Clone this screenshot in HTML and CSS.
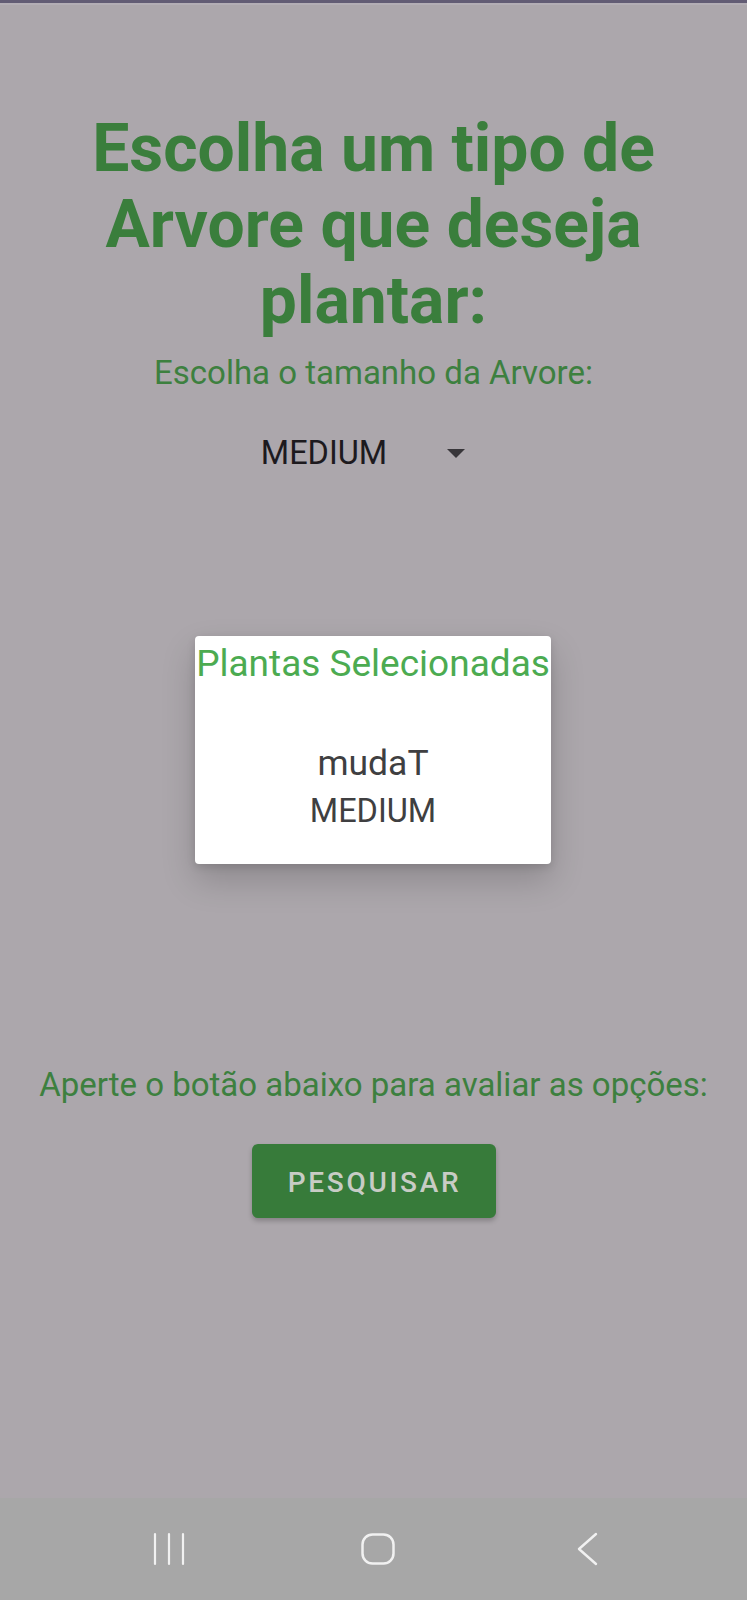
FILE: index.html
```html
<!DOCTYPE html>
<html lang="pt">
<head>
<meta charset="utf-8">
<title>Escolha um tipo de Arvore</title>
<link rel="stylesheet" href="styles.css">
</head>
<body>
<div class="status"></div>
<main class="screen">
  <h1 class="title">Escolha um tipo de<br>Arvore que deseja<br>plantar:</h1>
  <p class="label">Escolha o tamanho da Arvore:</p>
  <div class="spinner">
    <span class="spinner-text">MEDIUM</span>
    <svg class="spinner-arrow" width="18" height="9" viewBox="0 0 18 9"><path d="M0 0 L18 0 L9 9 Z" fill="#38363a"/></svg>
  </div>
  <p class="label hint">Aperte o botão abaixo para avaliar as opções:</p>
  <button class="btn">PESQUISAR</button>
</main>
<nav class="navbar">
  <svg class="nav-icon" width="40" height="40" viewBox="0 0 40 40"><g stroke="#f1f1f1" stroke-width="2.2" stroke-linecap="round"><line x1="6" y1="5" x2="6" y2="35"/><line x1="20" y1="5" x2="20" y2="35"/><line x1="34" y1="5" x2="34" y2="35"/></g></svg>
  <svg class="nav-icon" width="40" height="40" viewBox="0 0 40 40"><rect x="4.5" y="5.5" width="31" height="29" rx="10" fill="none" stroke="#f1f1f1" stroke-width="2.5"/></svg>
  <svg class="nav-icon" width="40" height="40" viewBox="0 0 40 40"><path d="M29 5 L12 20 L29 35" fill="none" stroke="#f1f1f1" stroke-width="2.4" stroke-linecap="round" stroke-linejoin="round"/></svg>
</nav>
<div class="overlay">
  <div class="dialog">
    <div class="dialog-title">Plantas Selecionadas</div>
    <div class="dialog-name">mudaT</div>
    <div class="dialog-size">MEDIUM</div>
  </div>
</div>
</body>
</html>
```
FILE: styles.css
```css
html, body {
  margin: 0;
  padding: 0;
}
body {
  width: 747px;
  height: 1600px;
  background: #aca7ac;
  font-family: Roboto, "Liberation Sans", sans-serif;
  display: flex;
  flex-direction: column;
  position: relative;
  overflow: hidden;
}
.status {
  height: 3px;
  background: #625c74;
  border-bottom: 2px solid #b3aeb5;
  flex: none;
}
.screen {
  flex: 1;
  display: flex;
  flex-direction: column;
  align-items: center;
  padding-top: 106px;
}
.title {
  margin: 0;
  font-size: 66px;
  line-height: 76px;
  font-weight: 700;
  color: #3a7e3c;
  text-align: center;
}
.label {
  margin: 14px 0 0;
  font-size: 33px;
  line-height: 40px;
  color: #3d803f;
  text-align: center;
}
.spinner {
  margin-top: 40px;
  display: flex;
  align-items: center;
  gap: 60px;
  padding-right: 21px;
  height: 40px;
}
.spinner-text {
  font-size: 32.5px;
  line-height: 40px;
  color: #1d1a1e;
}
.spinner-arrow {
  display: block;
}
.hint {
  margin-top: 592px;
}
.btn {
  margin-top: 39px;
  width: 244px;
  height: 74px;
  border: none;
  border-radius: 6px;
  background: #377b3a;
  color: #c8ccc5;
  font-family: Roboto, "Liberation Sans", sans-serif;
  font-size: 28px;
  font-weight: 500;
  letter-spacing: 2.7px;
  padding: 3px 0 0 2px;
  box-shadow: 0 3px 5px rgba(0, 0, 0, 0.22);
}
.navbar {
  flex: none;
  height: 102px;
  background: #a7a7a7;
  display: flex;
  align-items: center;
  justify-content: center;
  gap: 169px;
  padding-left: 8px;
}
.nav-icon {
  display: block;
}
.overlay {
  position: absolute;
  top: 636px;
  left: 0;
  right: 0;
  display: flex;
  justify-content: center;
  padding-right: 1px;
}
.dialog {
  width: 356px;
  height: 228px;
  box-sizing: border-box;
  background: #ffffff;
  border-radius: 4px;
  box-shadow: 0 16px 34px rgba(0, 0, 0, 0.18), 0 3px 8px rgba(0, 0, 0, 0.12);
  display: flex;
  flex-direction: column;
  align-items: center;
  padding-top: 6px;
}
.dialog-title {
  font-size: 37px;
  line-height: 43px;
  color: #4cab51;
  white-space: nowrap;
}
.dialog-name {
  margin-top: 56px;
  font-size: 35.5px;
  line-height: 44px;
  color: #3f3f41;
}
.dialog-size {
  margin-top: 7px;
  font-size: 32.5px;
  line-height: 38px;
  color: #3f3f41;
}
```
